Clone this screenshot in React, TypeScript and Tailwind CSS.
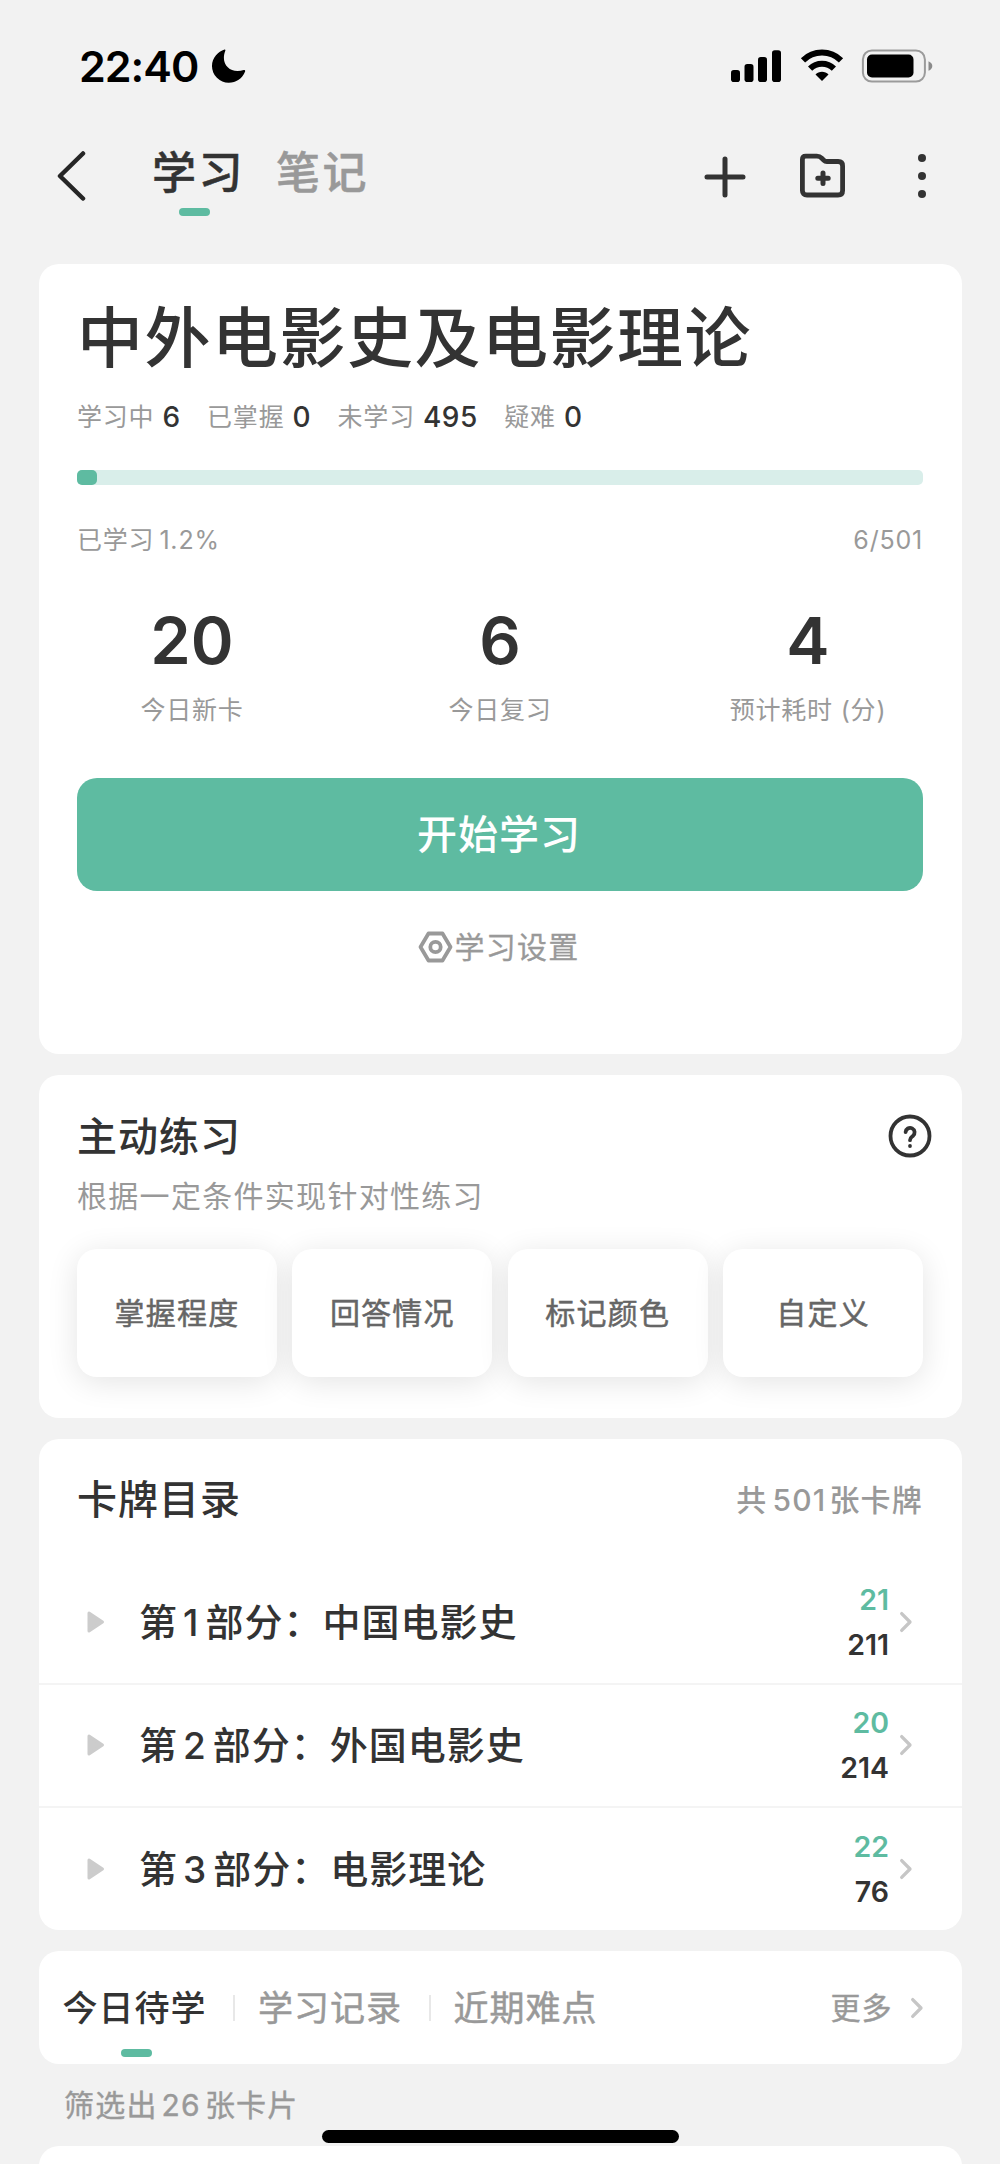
import type { ReactNode } from "react"

const stats = [
  { label: "学习中", value: "6" },
  { label: "已掌握", value: "0" },
  { label: "未学习", value: "495" },
  { label: "疑难", value: "0" },
]

const today = [
  { label: "今日新卡", value: "20" },
  { label: "今日复习", value: "6" },
  { label: "预计耗时 (分)", value: "4" },
]

const practice = ["掌握程度", "回答情况", "标记颜色", "自定义"]

const chapters = [
  { no: "1", name: "中国电影史", due: "21", total: "211" },
  { no: "2", name: "外国电影史", due: "20", total: "214" },
  { no: "3", name: "电影理论", due: "22", total: "76" },
]

const Card = ({ className, children }: { className: string; children?: ReactNode }) => (
  <section className={`mx-[38.5px] rounded-[20px] bg-white ${className}`}>{children}</section>
)

const Chevron = () => (
  <svg width="14" height="22" viewBox="0 0 14 22" fill="none" stroke="#c6c6c6" strokeWidth="3.3" strokeLinecap="round" strokeLinejoin="round">
    <path d="M2.7 2.6 11 11l-8.300 8.400" />
  </svg>
)

const StatusBar = () => (
  <div className="flex h-[132px] items-center pl-[79px] pr-[66px] text-black">
    <span className="text-[43px] font-semibold leading-none tracking-[-1px]">22:40</span>
    <svg className="ml-[14px]" width="34" height="34" viewBox="0 0 34 34">
      <path d="M12.6.6C6 2.600 0 9.200 0 17a16.600 16.600 0 0 0 16.800 16.700c7.200 0 13.600-4.200 16.300-11.300.3-1-.5-1.600-1.400-1.300-2 .7-4 1-6.200 1C17.800 22.100 11.900 16.500 11.900 9c0-2.400.5-4.900 1.400-7.200.3-.8 0-1.400-.7-1.200z" />
    </svg>
    <div className="ml-auto flex items-center">
      <svg width="52" height="34" viewBox="0 0 52 34">
        <rect x="1" y="21" width="9" height="12" rx="2.800" />
        <rect x="14.500" y="15" width="9" height="18" rx="2.800" />
        <rect x="28" y="8" width="9" height="25" rx="2.800" />
        <rect x="42" y="1.300" width="9" height="31.700" rx="2.800" />
      </svg>
      <svg className="ml-[18px]" width="44" height="34" viewBox="0 0 44 34">
        <path d="M22 32 15.500 25.400C17.200 23.700 19.500 22.800 22 22.800s4.800.9 6.500 2.600z" />
        <path d="M10.100 19.600a17 17 0 0 1 23.800 0" fill="none" stroke="#000" strokeWidth="6" />
        <path d="M3 11.400a27 27 0 0 1 38 0" fill="none" stroke="#000" strokeWidth="6" />
      </svg>
      <svg className="ml-[17px]" width="73" height="34" viewBox="0 0 73 34">
        <rect x="1.900" y="1.400" width="62" height="31.200" rx="9" fill="none" stroke="#9b9b9b" strokeWidth="2" />
        <rect x="6" y="5.500" width="46.500" height="23" rx="5" />
        <path d="M67.500 12.200c2.400 1 3.800 2.700 3.800 4.800s-1.400 3.800-3.800 4.800z" fill="#8a8a8a" />
      </svg>
    </div>
  </div>
)

const NavBar = () => (
  <div className="flex h-[88px] items-center pt-[2px] pl-[56px] pr-[73px]">
    <svg className="-mt-[2px]" width="30" height="52" viewBox="0 0 30 52" fill="none" stroke="#262626" strokeWidth="4.500" strokeLinecap="round" strokeLinejoin="round">
      <path d="M27 3.500 4 26l23 22.500" />
    </svg>
    <div className="-mt-[8px] ml-[66px] flex gap-[31px] text-[44px] leading-[60px] font-medium tracking-[2.500px] text-[#333] [-webkit-text-stroke:0.5px]">
      <div className="relative">
        学习
        <span className="absolute bottom-[-13px] left-[27px] h-[8px] w-[31px] rounded-full bg-[#5ebba1]" />
      </div>
      <div className="text-[#999]">笔记</div>
    </div>
    <svg className="ml-auto" width="42" height="42" viewBox="0 0 42 42" stroke="#333" strokeWidth="5" strokeLinecap="round">
      <path d="M21 3v36M3 21h36" />
    </svg>
    <svg className="ml-[53px]" width="48" height="48" viewBox="0 0 48 48" fill="none" stroke="#333" strokeWidth="4.800" strokeLinejoin="round" strokeLinecap="round">
      <path d="M3.400 6.600q0-3.400 3.400-3.400h11q3 0 5 2l2 2q1.300 1.300 3 1.300h11.400q4.400 0 4.400 4.400v24.500q0 4.600-4.600 4.600H8q-4.600 0-4.600-4.600z" />
      <path d="M24 20v10.400M18.800 25.200h10.400" strokeWidth="5" />
    </svg>
    <svg className="ml-[70px] -mt-[2px]" width="10" height="46" viewBox="0 0 10 46" fill="#333">
      <circle cx="5" cy="5" r="4" />
      <circle cx="5" cy="23" r="4" />
      <circle cx="5" cy="41" r="4" />
    </svg>
  </div>
)

const Overview = () => (
  <Card className="h-[790px] px-[38.5px] pt-[34px]">
    <h1 className="text-[66px] leading-[80px] font-medium tracking-[1.500px] text-[#333]">中外电影史及电影理论</h1>
    <div className="mt-[19px] flex gap-[26.500px] text-[25px] leading-[40px] tracking-[0.800px] text-[#999]">
      {stats.map((s, idx) => (
        <span key={idx} className="flex">
          {s.label}
          <b className="ml-[8px] text-[28px] font-medium tracking-[0.500px] text-[#333]">{s.value}</b>
        </span>
      ))}
    </div>
    <div className="mt-[33px] h-[15px] rounded-[5px] bg-[#d9eeea]">
      <div className="h-full w-[20px] rounded-[5px] bg-[#5ebba1]" />
    </div>
    <div className="mt-[35px] flex justify-between text-[25px] leading-[40px] tracking-[0.800px] text-[#999]">
      <span>已学习<span className="ml-[5px]">1.2%</span></span>
      <span>6/501</span>
    </div>
    <div className="mt-[42px] grid grid-cols-[230px_1fr_230px] text-center">
      {today.map((t, idx) => (
        <div key={idx}>
          <p className="text-[65px] leading-[78px] font-semibold text-[#333]">{t.value}</p>
          <p className="mt-[10px] text-[25px] leading-[40px] tracking-[0.800px] whitespace-nowrap text-[#999]">{t.label}</p>
        </div>
      ))}
    </div>
    <button className="mt-[48px] block h-[112.500px] w-full rounded-[20px] bg-[#5ebba1] pt-[2px] pr-[2px] text-[40px] font-medium tracking-[1px] text-white">
      开始学习
    </button>
    <div className="mt-[36.500px] flex h-[40px] items-center justify-center text-[30px] tracking-[1.300px] text-[#999] [-webkit-text-stroke:0.3px]">
      <svg className="mr-px -ml-[2px]" width="35" height="32" viewBox="0 0 35 32" fill="none" stroke="#999" strokeWidth="3.800" strokeLinejoin="round">
        <path d="M10.500 2.500h14L32.500 16l-8 13.500h-14L2.500 16z" />
        <circle cx="17.500" cy="16" r="5.200" />
      </svg>
      <span>学习设置</span>
    </div>
  </Card>
)

const Practice = () => (
  <Card className="mt-[21px] h-[343px] px-[38.5px] pt-[37px]">
    <div className="flex h-[50px] items-center justify-between">
      <h2 className="text-[40px] leading-[50px] font-medium tracking-[1px] text-[#333]">主动练习</h2>
      <svg className="-mt-[2px] -mr-[9px]" width="44" height="44" viewBox="0 0 44 44" fill="none" stroke="#333" strokeWidth="3.800" strokeLinecap="round" strokeLinejoin="round">
        <circle cx="22" cy="22" r="19.500" />
        <path d="M17.600 18.200a4.500 4.500 0 1 1 7.300 3.700c-1.800 1.400-2.900 2-2.900 4.300" />
        <circle cx="22" cy="32" r="1.900" fill="#333" stroke="none" />
      </svg>
    </div>
    <p className="mt-[14px] text-[30px] leading-[40px] tracking-[1.300px] text-[#999]">根据一定条件实现针对性练习</p>
    <div className="mt-[32.500px] grid grid-cols-4 gap-[15.500px]">
      {practice.map((p) => (
        <button key={p} className="h-[128px] rounded-[20px] bg-white pt-px text-[30px] tracking-[1.200px] text-[#666] shadow-[0_5px_31px_rgba(0,0,0,0.11)] [-webkit-text-stroke:0.5px]">
          {p}
        </button>
      ))}
    </div>
  </Card>
)

const Catalog = () => (
  <Card className="mt-[20.500px] h-[491.500px]">
    <div className="flex h-[123px] items-center justify-between px-[38.5px]">
      <h2 className="text-[40px] leading-none font-medium tracking-[1px] text-[#333]">卡牌目录</h2>
      <span className="text-[30px] leading-none font-medium tracking-[1.200px] text-[#999]">共<span className="mr-[3px] ml-[5px]">501</span>张卡牌</span>
    </div>
    {chapters.map((c) => (
      <div key={c.no} className="flex h-[123px] items-center border-b-2 border-[#f4f4f4] pr-[48.500px] pl-[48px] last:border-b-0">
        <svg width="18" height="22" viewBox="0 0 18 22" fill="#ccc" stroke="#ccc" strokeWidth="3" strokeLinejoin="round">
          <path d="M2 2v18L15.500 11z" />
        </svg>
        <span className="ml-[34.500px] flex-1 text-[38px] leading-none font-medium tracking-[1px] text-[#333]">
          第<span className="mr-[6px] ml-[5px] text-[37px]">{c.no}</span>部分：{c.name}
        </span>
        <div className="text-right text-[28.500px] leading-[45px] font-semibold text-[#333]">
          <p className="text-[#5ebba1]">{c.due}</p>
          <p>{c.total}</p>
        </div>
        <div className="ml-[10px]">
          <Chevron />
        </div>
      </div>
    ))}
  </Card>
)

const Pending = () => (
  <Card className="mt-[21px] flex h-[113px] items-center pr-[38px] pl-[24px] text-[35px] leading-none tracking-[1px] text-[#999]">
    <div className="relative mt-[2px] font-medium text-[#333]">
      今日待学
      <span className="absolute bottom-[-31px] left-[58px] h-[8px] w-[31px] rounded-full bg-[#5ebba1]" />
    </div>
    <i className="mr-[23px] ml-[26.500px] h-[26px] w-[2px] bg-[#e8e8e8]" />
    <span className="mt-[2px] [-webkit-text-stroke:0.5px]">学习记录</span>
    <i className="mr-[23px] ml-[26.500px] h-[26px] w-[2px] bg-[#e8e8e8]" />
    <span className="mt-[2px] [-webkit-text-stroke:0.5px]">近期难点</span>
    <span className="mt-px mr-[17px] ml-auto text-[30px] [-webkit-text-stroke:0.4px]">更多</span>
    <Chevron />
  </Card>
)

export default function App() {
  return (
    <main className="relative h-[2164px] w-[1000px] overflow-hidden bg-[#f2f2f2] font-['Inter','Noto_Sans_CJK_SC',sans-serif]">
      <StatusBar />
      <NavBar />
      <div className="h-[44px]" />
      <Overview />
      <Practice />
      <Catalog />
      <Pending />
      <p className="flex h-[82px] items-center pl-[64px] text-[30px] leading-none tracking-[1.200px] text-[#999] [-webkit-text-stroke:0.4px]">
        筛选出<span className="mr-[4px] ml-[4px]">26</span>张卡片
      </p>
      <Card className="h-[60px]" />
      {/* home indicator */}
      <div className="absolute bottom-[21px] left-[322px] h-[13px] w-[357px] rounded-full bg-black" />
    </main>
  )
}
